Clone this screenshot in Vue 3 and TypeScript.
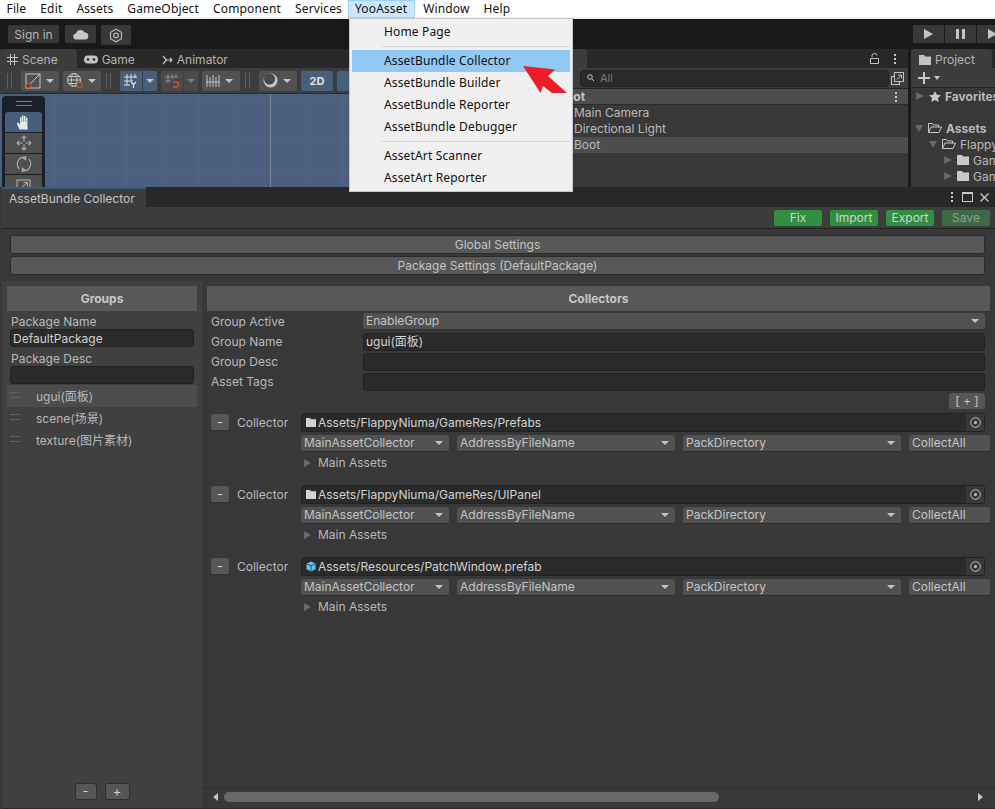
<template>
  <div class="app">
    <div class="menubar">
      <span v-for="m in menus" :key="m" class="menu-item" :class="{ open: m === 'YooAsset' }">{{ m }}</span>
    </div>

    <div class="main-toolbar">
      <button class="tb-btn sign">Sign in</button>
      <button class="tb-btn cloud">
        <svg width="16" height="11" viewBox="0 0 16 11"><path d="M3.500 10.500a3 3 0 0 1-.4-6A4.600 4.600 0 0 1 11.700 3.600 3.500 3.500 0 0 1 12.600 10.500Z" fill="#c8c8c8" /></svg>
      </button>
      <button class="tb-btn gear">
        <svg width="14" height="15" viewBox="0 0 14 15" fill="none" stroke="#b8b8b8"><path d="M7 1.200 12.500 4.300v6.400L7 13.800 1.500 10.700V4.300Z" stroke-width="1.200" /><circle cx="7" cy="7.500" r="2.400" stroke-width="1.200" /></svg>
      </button>
      <div class="spacer"></div>
      <div class="play-group">
        <button class="play-btn"><svg width="9" height="10" viewBox="0 0 9 10"><path d="M0 0 9 5 0 10Z" fill="#c4c4c4" /></svg></button>
        <button class="play-btn"><svg width="9" height="10" viewBox="0 0 9 10"><path d="M0 0h3v10H0ZM6 0h3v10H6Z" fill="#c4c4c4" /></svg></button>
        <button class="play-btn last"><svg width="9" height="10" viewBox="0 0 9 10"><path d="M0 0 9 5 0 10Z" fill="#c4c4c4" /></svg></button>
      </div>
    </div>

    <div class="editor">
      <section class="scene-panel">
        <div class="tabs">
          <div class="tab active">
            <svg width="11" height="11" viewBox="0 0 11 11" stroke="#c4c4c4" fill="none"><path d="M3.500 0v11M7.500 0v11M0 3.500h11M0 7.500h11" /></svg>
            Scene
          </div>
          <div class="tab">
            <svg width="14" height="9" viewBox="0 0 14 9"><rect width="14" height="8" y=".5" rx="4" fill="#c4c4c4" /><circle cx="4" cy="4.500" r="1.300" fill="#282828" /><circle cx="10" cy="4.500" r="1.300" fill="#282828" /></svg>
            Game
          </div>
          <div class="tab">
            <svg width="11" height="10" viewBox="0 0 11 10" stroke="#c4c4c4" fill="none"><path d="M1 1 4.500 5 1 9M3.500 5H10M8 3l2 2-2 2" stroke-width="1.200" /></svg>
            Animator
          </div>
        </div>
        <div class="scene-tools">
          <span class="grip"></span>
          <div class="st-btn w38">
            <svg width="16" height="16" viewBox="0 0 16 16" fill="none"><rect x="1" y="1" width="14" height="14" stroke="#c4c4c4" /><path d="M15 1 4 12" stroke="#c4c4c4" /><circle cx="3.500" cy="12.500" r="2.500" stroke="#d2572c" stroke-width="1.200" fill="#4a4a4a" /></svg>
            <i class="caret"></i>
          </div>
          <div class="st-btn w38">
            <svg width="16" height="16" viewBox="0 0 16 16" fill="none" stroke="#c4c4c4"><circle cx="7" cy="7" r="6.500" /><ellipse cx="7" cy="7" rx="3" ry="6.500" /><path d="M.5 7h13M1.500 3.500h11M1.500 10.500h11" /><circle cx="12.500" cy="12" r="2.500" stroke="#d2572c" stroke-width="1.200" fill="#4a4a4a" /></svg>
            <i class="caret"></i>
          </div>
          <span class="grip"></span>
          <div class="st-split on">
            <div class="part main">
              <svg width="14" height="14" viewBox="0 0 14 14" fill="none" stroke="#e0e0e0"><path d="M3 0v11M7 0v7M11 0v4M0 3h13M0 7h9M0 11h6" /><path d="M7 8l2.500 2.500L12 8M9.500 10.500V14" stroke-width="1.300" /></svg>
            </div>
            <div class="part arrow"><i class="caret"></i></div>
          </div>
          <div class="st-split">
            <div class="part main">
              <svg width="14" height="14" viewBox="0 0 14 14" fill="none" stroke="#8e8e8e"><path d="M3 0v9M7 0v5M11 0v3M0 3h13M0 7h6" /><path d="M8 8h3a2.500 2.500 0 0 1 0 5H8" stroke="#c25a2a" stroke-width="1.400" /></svg>
            </div>
            <div class="part arrow dim"><i class="caret"></i></div>
          </div>
          <div class="st-btn w38">
            <svg width="14" height="14" viewBox="0 0 14 14" stroke="#c4c4c4"><path d="M1 1v12M4 3v10M7 1v12M10 3v10M13 1v12M0 8h14" /></svg>
            <i class="caret"></i>
          </div>
          <span class="grip"></span>
          <div class="st-btn w38">
            <svg width="15" height="15" viewBox="0 0 15 15"><circle cx="7.500" cy="7.500" r="7" fill="#c4c4c4" /><circle cx="6.500" cy="6" r="5.500" fill="#484848" /></svg>
            <i class="caret"></i>
          </div>
          <div class="st-2d">2D</div>
          <div class="st-2d"></div>
        </div>
        <div class="scene-view">
          <div class="tool-strip">
            <div class="strip-grip"></div>
            <div class="tool on">
              <svg width="16" height="17" viewBox="0 0 15 15"><path d="M3.200 14 .8 8.200l1.300-.7 1.700 2V2.600h1.300V7h.5V1h1.400v6h.5V1.500h1.400V7h.5V3h1.300v7.500L11 14Z" fill="#eaeaea" /></svg>
            </div>
            <div class="tool">
              <svg width="16" height="16" viewBox="0 0 15 15" fill="none" stroke="#b4b4b4"><path d="M7.500 2v4M7.500 9v4M2 7.500h4M9 7.500h4" /><path d="M5.500 3l2-2 2 2M5.500 12l2 2 2-2M3 5.500l-2 2 2 2M12 5.500l2 2-2 2" /></svg>
            </div>
            <div class="tool">
              <svg width="16" height="16" viewBox="0 0 15 15" fill="none" stroke="#b4b4b4"><path d="M3 12A6.500 6.500 0 0 1 9 1.200M12 3a6.500 6.500 0 0 1-6 10.800M9 0v3.500l-2.500-1.800M6 15v-3.500l2.500 1.800" /></svg>
            </div>
            <div class="tool">
              <svg width="15" height="15" viewBox="0 0 15 15" fill="none" stroke="#b4b4b4"><rect x="1" y="2" width="13" height="12" /><path d="M5 10l6-5M7.500 4.500H11.500V8.500" /></svg>
            </div>
          </div>
        </div>
      </section>

      <section class="hierarchy-panel">
        <div class="tabs">
          <div class="tab active wide"></div>
          <div class="spacer"></div>
          <svg class="lock" width="9" height="11" viewBox="0 0 9 11" fill="none" stroke="#c4c4c4"><path d="M2 4V2.500a2.500 2 0 0 1 5 0M.5 5.500h8v5h-8Z" /></svg>
          <span class="dots"></span>
        </div>
        <div class="hier-tools">
          <div class="search">
            <svg width="9" height="8" viewBox="0 0 9 8" fill="none" stroke="#c4c4c4"><circle cx="3" cy="3" r="2.300" /><path d="M4.700 4.700 7 7" /></svg>
            <span>All</span>
          </div>
          <svg class="pop" width="13" height="13" viewBox="0 0 13 13" fill="none" stroke="#c4c4c4"><rect x=".5" y="4.500" width="8" height="8" /><rect x="3.500" y=".5" width="9" height="9" fill="#383838" /><path d="M6 7.500l4-4M7 3h3.500v3.500" /></svg>
        </div>
        <div class="hier-head">
          <span>Boot</span>
          <span class="dots head-dots"></span>
        </div>
        <div class="hier-row">Main Camera</div>
        <div class="hier-row">Directional Light</div>
        <div class="hier-row sel">Boot</div>
      </section>

      <section class="project-panel">
        <div class="tabs">
          <div class="tab active project-tab">
            <svg width="12" height="10" viewBox="0 0 12 10"><path d="M0 0h5l1 1.500h6V10H0Z" fill="#c4c4c4" /></svg>
            Project
          </div>
        </div>
        <div class="proj-tools">
          <svg width="12" height="12" viewBox="0 0 12 12"><path d="M5 0h2v5h5v2H7v5H5V7H0V5h5Z" fill="#c8c8c8" /></svg>
          <i class="caret"></i>
        </div>
        <div class="proj-tree">
          <div v-for="r in tree" :key="r.label" class="tree-row" :class="{ gap: r.gap }" :style="{ paddingLeft: r.indent + 'px' }">
            <i class="tri" :class="r.open ? 'down' : 'right'"></i>
            <svg v-if="r.star" width="12" height="11" viewBox="0 0 12 11"><path d="M6 0l1.800 3.800 4.200.5-3.100 2.800.8 3.900L6 9.100 2.300 11l.8-3.900L0 4.300l4.200-.5Z" fill="#c8c8c8" /></svg>
            <svg v-else-if="r.open" width="14" height="10" viewBox="0 0 14 10" fill="none" stroke="#c8c8c8"><path d="M.5 9.500V.5h4l1 1.500h5v2M.5 9.500l2.500-5.500h10.500l-2.500 5.500Z" /></svg>
            <svg v-else width="12" height="10" viewBox="0 0 12 10"><path d="M0 0h5l1 1.500h6V10H0Z" fill="#c8c8c8" /></svg>
            <span :class="{ bold: r.bold }">{{ r.label }}</span>
          </div>
        </div>
      </section>
    </div>

    <div class="window">
      <div class="win-tabs">
        <div class="win-tab">AssetBundle Collector</div>
        <div class="spacer"></div>
        <span class="dots"></span>
        <svg width="11" height="10" viewBox="0 0 11 10" fill="none" stroke="#c8c8c8"><rect x=".5" y=".5" width="10" height="9" /><path d="M0 1.500h11" /></svg>
        <svg class="win-close" width="9" height="9" viewBox="0 0 9 9" stroke="#c8c8c8" stroke-width="1.300"><path d="M.5.5l8 8M8.500.5l-8 8" /></svg>
      </div>
      <div class="win-actions">
        <button class="green">Fix</button>
        <button class="green">Import</button>
        <button class="green">Export</button>
        <button class="green off">Save</button>
      </div>
      <div class="settings">
        <button class="wide-btn">Global Settings</button>
        <button class="wide-btn">Package Settings (DefaultPackage)</button>
      </div>
      <div class="body">
        <aside class="groups">
          <div class="pane-head">Groups</div>
          <div class="field-label first">Package Name</div>
          <div class="input">DefaultPackage</div>
          <div class="field-label">Package Desc</div>
          <div class="input"></div>
          <ul class="group-list">
            <li v-for="(g, i) in groups" :key="g" :class="{ sel: i === 0 }">
              <span class="handle"></span>
              {{ g }}
            </li>
          </ul>
          <div class="spacer"></div>
          <div class="group-btns">
            <button class="small">-</button>
            <button class="small plus">+</button>
          </div>
        </aside>

        <main class="collectors">
          <div class="pane-head">Collectors</div>
          <div class="form">
            <div class="form-row">
              <label>Group Active</label>
              <div class="select full">EnableGroup<i class="caret"></i></div>
            </div>
            <div class="form-row">
              <label>Group Name</label>
              <div class="text-in">ugui(面板)</div>
            </div>
            <div class="form-row">
              <label>Group Desc</label>
              <div class="text-in"></div>
            </div>
            <div class="form-row">
              <label>Asset Tags</label>
              <div class="text-in"></div>
            </div>
          </div>
          <div class="add-row"><button class="add">[ + ]</button></div>
          <div v-for="c in collectors" :key="c.path" class="collector">
            <button class="remove">-</button>
            <span class="c-label">Collector</span>
            <div class="c-body">
              <div class="path">
                <svg v-if="c.prefab" width="10" height="11" viewBox="0 0 11 11"><path d="M5.500 0 10.500 2.500v6L5.500 11 .5 8.500v-6Z" fill="#5cc4ee" /><path d="M5.500 4.500v6.500M.5 2.500l5 2.200 5-2.200" stroke="#2a2a2a" fill="none" stroke-width=".8" /></svg>
                <svg v-else width="10" height="9" viewBox="0 0 10 9"><path d="M0 0h4l1 1.300h5V9H0Z" fill="#d2d2d2" /></svg>
                <span>{{ c.path }}</span>
                <div class="target">
                  <svg width="11" height="11" viewBox="0 0 11 11" fill="none" stroke="#c4c4c4"><circle cx="5.500" cy="5.500" r="4.800" /><circle cx="5.500" cy="5.500" r="1.500" fill="#c4c4c4" stroke="none" /></svg>
                </div>
              </div>
              <div class="selects">
                <div class="select s1">MainAssetCollector<i class="caret"></i></div>
                <div class="select s2">AddressByFileName<i class="caret"></i></div>
                <div class="select s2">PackDirectory<i class="caret"></i></div>
                <div class="select s3">CollectAll</div>
              </div>
              <div class="foldout"><i class="tri right"></i>Main Assets</div>
            </div>
          </div>
          <div class="spacer"></div>
          <div class="hscroll">
            <i class="sc-arrow left"></i>
            <div class="sc-track"><div class="sc-thumb"></div></div>
            <i class="sc-arrow right"></i>
          </div>
        </main>
      </div>
    </div>

    <div class="dropdown">
      <template v-for="(it, i) in menuItems" :key="i">
        <div v-if="it === '-'" class="dd-sep"></div>
        <div v-else class="dd-item" :class="{ hot: it === 'AssetBundle Collector' }">{{ it }}</div>
      </template>
    </div>
    <svg class="pointer" width="46" height="30" viewBox="0 0 46 30">
      <path d="M1 1 33 4.500 26 11 45 28 30 28 21 21 18.500 28Z" fill="#ee1c25" />
    </svg>
  </div>
</template>

<script setup lang="ts">
const menus = ["File", "Edit", "Assets", "GameObject", "Component", "Services", "YooAsset", "Window", "Help"];

const menuItems = [
  "Home Page",
  "-",
  "AssetBundle Collector",
  "AssetBundle Builder",
  "AssetBundle Reporter",
  "AssetBundle Debugger",
  "-",
  "AssetArt Scanner",
  "AssetArt Reporter",
];

const tree = [
  { label: "Favorites", indent: 5, star: true, bold: true, open: false, gap: true },
  { label: "Assets", indent: 4, open: true, bold: true },
  { label: "FlappyNiuma", indent: 18, open: true },
  { label: "GameArt", indent: 33, open: false },
  { label: "GameRes", indent: 33, open: false },
];

const groups = ["ugui(面板)", "scene(场景)", "texture(图片素材)"];

const collectors = [
  { path: "Assets/FlappyNiuma/GameRes/Prefabs", prefab: false },
  { path: "Assets/FlappyNiuma/GameRes/UIPanel", prefab: false },
  { path: "Assets/Resources/PatchWindow.prefab", prefab: true },
];
</script>

<style>
html,
body {
  margin: 0;
  background: #383838;
  overflow: hidden;
}
</style>

<style scoped>
.app {
  position: relative;
  width: 995px;
  height: 809px;
  overflow: hidden;
  display: flex;
  flex-direction: column;
  font-family: Inter, "Noto Sans CJK SC", sans-serif;
  font-size: 12px;
  color: #b8b8b8;
}
button {
  font-family: inherit;
  padding: 0;
  border: none;
}
.spacer {
  flex: 1;
}

/* menu bar */
.menubar {
  height: 17px;
  flex: none;
  background: #fff;
  border-bottom: 2px solid #f0f0f0;
  display: flex;
  font-family: "Noto Sans", "Noto Sans CJK SC", sans-serif;
  color: #111;
  letter-spacing: 0.15px;
}
.menu-item {
  padding: 0 6px;
  font-size: 12px;
  box-sizing: border-box;
  border: 1px solid transparent;
  height: 18px;
  line-height: 16px;
}
.menu-item:first-child {
  padding-left: 5.500px;
}
.menu-item.open {
  background: #cce8ff;
  border-color: #99d1ff;
  margin: 0 1px 0 -1px;
  padding-right: 7px;
}

/* main toolbar */
.main-toolbar {
  height: 30px;
  flex: none;
  background: #191919;
  display: flex;
  align-items: flex-start;
  padding: 6px 0 0 8px;
  box-sizing: border-box;
}
.tb-btn {
  background: #383838;
  color: #b4b4b4;
  height: 18px;
  border-radius: 2px;
  font-size: 12px;
  display: flex;
  align-items: center;
  justify-content: center;
}
.sign {
  width: 51px;
  margin-right: 6px;
}
.cloud {
  width: 31px;
  margin-right: 5px;
}
.gear {
  width: 30px;
  height: 20px;
}
.play-group {
  display: flex;
  gap: 1px;
}
.play-btn {
  width: 31px;
  height: 18px;
  background: #383838;
  display: flex;
  align-items: center;
  justify-content: center;
}
.play-btn svg {
  flex: none;
}
.play-btn.last {
  width: 18px;
  justify-content: flex-start;
  padding-left: 11px;
  box-sizing: border-box;
}

/* docked panels */
.editor {
  height: 138px;
  flex: none;
  display: flex;
  background: #191919;
  gap: 3px;
}
.scene-panel {
  width: 490px;
  flex: none;
}
.hierarchy-panel {
  flex: 1;
  background: #383838;
}
.project-panel {
  width: 84px;
  flex: none;
  background: #383838;
}
.tabs {
  height: 19px;
  background: #282828;
  display: flex;
  align-items: center;
}
.tab {
  height: 19px;
  display: flex;
  align-items: center;
  gap: 4px;
  padding: 2px 20px 0 7px;
  box-sizing: border-box;
  color: #b4b4b4;
}
.tab svg {
  flex: none;
}
.tab.active {
  background: #3c3c3c;
  border-radius: 3px 3px 0 0;
  padding-right: 19px;
}
.tab.wide {
  width: 94px;
  flex: none;
}
.lock {
  margin-right: 15px;
}
.dots {
  width: 2px;
  height: 2px;
  background: #c8c8c8;
  box-shadow: 0 -4px 0 #c8c8c8, 0 4px 0 #c8c8c8;
  margin-right: 12px;
}
.scene-tools {
  height: 26px;
  background: #3c3c3c;
  border-bottom: 1px solid #2c2c2c;
  box-sizing: border-box;
  display: flex;
  align-items: center;
  gap: 4px;
  padding-left: 6px;
}
.grip {
  width: 3px;
  height: 16px;
  border-left: 1px solid #606060;
  border-right: 1px solid #606060;
  margin: 0 5px 0 1px;
  flex: none;
}
.st-btn {
  height: 20px;
  background: #515151;
  border-radius: 2px;
  display: flex;
  align-items: center;
  gap: 5px;
  padding-left: 4px;
  box-sizing: border-box;
  flex: none;
}
.w38 {
  width: 38px;
}
.caret {
  display: inline-block;
  width: 0;
  height: 0;
  border-left: 4px solid transparent;
  border-right: 4px solid transparent;
  border-top: 4px solid #c4c4c4;
}
.st-split {
  display: flex;
  height: 20px;
  flex: none;
  gap: 1px;
  background: #3c3c3c;
  border-radius: 2px;
  overflow: hidden;
}
.part {
  height: 20px;
  display: flex;
  align-items: center;
  justify-content: center;
}
.part.main {
  width: 22px;
}
.part.arrow {
  width: 14px;
}
.part.dim .caret {
  border-top-color: #7a7a7a;
}
.st-split .part {
  background: #4a4a4a;
}
.st-split.on .part {
  background: #46607c;
}
.st-2d {
  width: 32px;
  height: 20px;
  flex: none;
  border-radius: 2px;
  background: #46607c;
  color: #e0e0e0;
  font-weight: 700;
  font-size: 11px;
  line-height: 20px;
  text-align: center;
}
.scene-view {
  height: 93px;
  background-color: #4d5f7f;
  background-image:
    linear-gradient(90deg, #7b8698 1px, transparent 1px),
    linear-gradient(90deg, rgba(255, 255, 255, 0.035) 1px, transparent 1px),
    linear-gradient(rgba(255, 255, 255, 0.035) 1px, transparent 1px);
  background-size: 490px 100%, 36px 36px, 36px 36px;
  background-position: 270px 0, 18px 0, 0 8px;
  padding: 2px 0 0 2px;
  box-sizing: border-box;
  overflow: hidden;
}
.tool-strip {
  width: 43px;
  background: #191e29;
  border-radius: 4px 4px 0 0;
  padding: 0 3px;
  box-sizing: border-box;
}
.strip-grip {
  height: 16px;
  width: 16px;
  margin: 0 auto;
  background:
    linear-gradient(#7a7a7a, #7a7a7a) 0 5px / 100% 1px no-repeat,
    linear-gradient(#7a7a7a, #7a7a7a) 0 9px / 100% 1px no-repeat;
}
.tool {
  height: 20px;
  margin-bottom: 1px;
  background: #4f4f4f;
  display: flex;
  align-items: center;
  justify-content: center;
}
.tool.on {
  background: #46607c;
  border-radius: 3px 3px 0 0;
}

/* hierarchy */
.hier-tools {
  height: 20px;
  background: #3c3c3c;
  display: flex;
  align-items: center;
  padding-left: 87px;
  padding-right: 4px;
  gap: 2px;
  border-bottom: 1px solid #232323;
}
.search {
  flex: 1;
  height: 15px;
  border: 1px solid #212121;
  border-radius: 4px;
  background: #2a2a2a;
  display: flex;
  align-items: center;
  gap: 4px;
  padding-left: 6px;
  color: #787878;
  font-size: 11px;
}
.pop {
  flex: none;
}
.hier-head {
  height: 15px;
  background: #4d4d4d;
  border-bottom: 1px solid #2a2a2a;
  display: flex;
  justify-content: space-between;
  align-items: center;
  padding-left: 65px;
  font-weight: 700;
  color: #c8c8c8;
}
.head-dots {
  margin-right: 11px;
}
.hier-row {
  height: 16px;
  line-height: 16px;
  padding-left: 81px;
}
.hier-row.sel {
  background: #4d4d4d;
}

/* project */
.project-tab {
  width: 81px;
  box-sizing: border-box;
  padding: 2px 0 0 8px;
}
.proj-tools {
  height: 19px;
  background: #3c3c3c;
  border-bottom: 1px solid #232323;
  display: flex;
  align-items: center;
  gap: 4px;
  padding-left: 7px;
}
.proj-tools .caret {
  border-left-width: 3.500px;
  border-right-width: 3.500px;
}
.proj-tree {
  white-space: nowrap;
  overflow: hidden;
}
.tree-row {
  height: 16px;
  display: flex;
  align-items: center;
  gap: 5px;
  font-size: 12px;
}
.tree-row svg,
.tree-row span {
  flex: none;
}
.tree-row span {
  margin-left: -1px;
}
.tree-row.gap {
  margin-bottom: 16px;
}
.bold {
  font-weight: 700;
}
.tri {
  display: inline-block;
  flex: none;
  width: 0;
  height: 0;
}
.tri.right {
  border-top: 4.500px solid transparent;
  border-bottom: 4.500px solid transparent;
  border-left: 7px solid #686868;
}
.tree-row .tri.right {
  border-left-width: 8px;
}
.tri.down {
  border-left: 4.500px solid transparent;
  border-right: 4.500px solid transparent;
  border-top: 7px solid #686868;
}

/* collector window */
.window {
  flex: 1;
  margin-left: 2px;
  display: flex;
  flex-direction: column;
  background: #383838;
  min-height: 0;
  border-bottom: 1px solid #2a2a2a;
}
.win-tabs {
  height: 20px;
  flex: none;
  background: #282828;
  display: flex;
  align-items: center;
  padding-right: 6px;
  box-sizing: border-box;
}
.win-tabs .dots {
  margin-right: 9px;
}
.win-close {
  margin-left: 7px;
}
.win-tab {
  width: 144px;
  height: 20px;
  box-sizing: border-box;
  background: #3c3c3c;
  border-top: 2px solid #2c5d87;
  padding-left: 7px;
  line-height: 20px;
  color: #c4c4c4;
}
.win-actions {
  height: 22px;
  flex: none;
  background: #3c3c3c;
  border-bottom: 1px solid #232323;
  box-sizing: border-box;
  display: flex;
  justify-content: flex-end;
  align-items: center;
  gap: 8px;
  padding-right: 5px;
}
.green {
  width: 48px;
  height: 16px;
  background: #2f8f3f;
  color: #d4d4d4;
  border-radius: 2px;
  font-size: 12px;
  line-height: 16px;
}
.green.off {
  background: #3d6a45;
  color: #8ca08e;
}
.settings {
  height: 52px;
  flex: none;
  box-sizing: border-box;
  padding: 6px 10px 0 8px;
  display: flex;
  flex-direction: column;
  gap: 2px;
  background: #383838;
}
.wide-btn {
  height: 19px;
  width: 100%;
  background: #575757;
  border: 1px solid #2a2a2a;
  border-radius: 3px;
  color: #c4c4c4;
  font-size: 12px;
  line-height: 16px;
}
.body {
  flex: 1;
  display: flex;
  min-height: 0;
}
.pane-head {
  height: 25px;
  flex: none;
  background: #585858;
  color: #c8c8c8;
  font-weight: 700;
  text-align: center;
  line-height: 25px;
}
.groups {
  width: 200px;
  flex: none;
  background: #404040;
  padding: 5px 5px 8px;
  box-sizing: border-box;
  display: flex;
  flex-direction: column;
}
.field-label {
  height: 14px;
  line-height: 14px;
  margin: 5px 0 0 4px;
}
.field-label.first {
  margin-top: 4px;
}
.input {
  margin: 0 3px;
  background: #2a2a2a;
  border: 1px solid #212121;
  border-radius: 3px;
  padding-left: 2px;
  height: 16px;
  line-height: 18px;
  color: #d2d2d2;
}
.group-list {
  list-style: none;
  margin: 1px 0 0;
  padding: 0;
}
.group-list li {
  height: 22px;
  line-height: 24px;
  padding-left: 29px;
  position: relative;
}
.group-list li.sel {
  background: #4c4c4c;
}
.handle {
  position: absolute;
  left: 3px;
  top: 7px;
  width: 10px;
  height: 4px;
  border-top: 1px solid #606060;
  border-bottom: 1px solid #606060;
}
.group-btns {
  display: flex;
  justify-content: center;
  gap: 8px;
}
.small {
  width: 22px;
  height: 17px;
  background: #565656;
  border: 1px solid #2e2e2e;
  border-radius: 3px;
  color: #d2d2d2;
  line-height: 13px;
  font-size: 13px;
}
.small.plus {
  width: 25px;
}
.collectors {
  flex: 1;
  min-width: 0;
  padding: 5px 5px 0;
  box-sizing: border-box;
  display: flex;
  flex-direction: column;
}
.form {
  padding-top: 1px;
  display: flex;
  flex-direction: column;
  gap: 1px;
}
.form-row {
  height: 19px;
  display: flex;
  align-items: center;
}
.form-row label {
  width: 152px;
  padding-left: 4px;
  flex: none;
}
.text-in {
  flex: 1;
  height: 18px;
  box-sizing: border-box;
  background: #2a2a2a;
  border: 1px solid #212121;
  border-radius: 3px;
  padding-left: 2px;
  line-height: 16px;
  margin-right: 5px;
  color: #d2d2d2;
}
.select {
  height: 17px;
  box-sizing: border-box;
  background: #515151;
  border-bottom: 1px solid #2e2e2e;
  border-radius: 3px;
  padding-left: 3px;
  line-height: 16px;
  display: flex;
  align-items: center;
  justify-content: space-between;
  color: #c4c4c4;
  flex: none;
}
.select .caret {
  margin-right: 6px;
}
.select.full {
  flex: 1;
  margin-right: 5px;
}
.add-row {
  display: flex;
  justify-content: flex-end;
  padding: 2px 5px 4px 0;
}
.add {
  width: 36px;
  height: 16px;
  background: #565656;
  border-radius: 3px;
  color: #c4c4c4;
  font-size: 12px;
  line-height: 16px;
}
.collector {
  display: flex;
  align-items: flex-start;
  height: 72px;
  flex: none;
  padding-left: 4px;
}
.remove {
  width: 18px;
  height: 17px;
  margin-top: 1px;
  background: #565656;
  border-radius: 3px;
  border-bottom: 1px solid #2e2e2e;
  color: #d2d2d2;
  line-height: 14px;
  flex: none;
}
.c-label {
  width: 72px;
  padding-left: 8px;
  box-sizing: border-box;
  flex: none;
  line-height: 20px;
}
.c-body {
  flex: 1;
  min-width: 0;
}
.path {
  height: 19px;
  box-sizing: border-box;
  background: #2a2a2a;
  border: 1px solid #212121;
  border-radius: 3px;
  margin-right: 5px;
  display: flex;
  align-items: center;
  gap: 2px;
  padding-left: 4px;
  color: #d2d2d2;
}
.target {
  margin-left: auto;
  width: 18px;
  height: 17px;
  background: #383838;
  display: flex;
  align-items: center;
  justify-content: center;
}
.selects {
  display: flex;
  gap: 8px;
  margin-top: 3px;
  overflow: hidden;
}
.s1 {
  width: 148px;
}
.s2 {
  width: 218px;
}
.s3 {
  width: 90px;
  border-radius: 3px 0 0 3px;
}
.foldout {
  display: flex;
  align-items: center;
  gap: 7px;
  padding-left: 3px;
  margin-top: 3px;
  height: 15px;
}
.hscroll {
  flex: none;
  border-top: 1px solid #2f2f2f;
  margin: 0 -5px 4px -5px;
  padding: 0 12px 0 11px;
  display: flex;
  align-items: center;
  gap: 6px;
  box-sizing: border-box;
  height: 16px;
}
.sc-track {
  flex: 1;
  height: 10px;
}
.sc-thumb {
  width: 495px;
  height: 10px;
  border-radius: 5px;
  background: #686868;
}
.sc-arrow {
  width: 0;
  height: 0;
  border-top: 4px solid transparent;
  border-bottom: 4px solid transparent;
  flex: none;
}
.sc-arrow.left {
  border-right: 5px solid #c8c8c8;
}
.sc-arrow.right {
  border-left: 5px solid #c8c8c8;
}

/* open YooAsset menu, lies over the editor */
.dropdown {
  position: absolute;
  left: 349px;
  top: 18px;
  width: 224px;
  height: 174px;
  box-sizing: border-box;
  background: #f0f0f0;
  border: 1px solid #c8c8c8;
  padding: 2px;
  font-family: "Noto Sans", "Noto Sans CJK SC", sans-serif;
  color: #111;
  font-size: 12px;
  letter-spacing: 0.15px;
}
.dd-item {
  height: 22px;
  line-height: 22px;
  padding-left: 32px;
}
.dd-item.hot {
  background: #90c8f6;
}
.dd-sep {
  height: 1px;
  background: #d7d7d7;
  margin: 3px 0 3px 30px;
}
.pointer {
  position: absolute;
  left: 522px;
  top: 65px;
}
</style>
